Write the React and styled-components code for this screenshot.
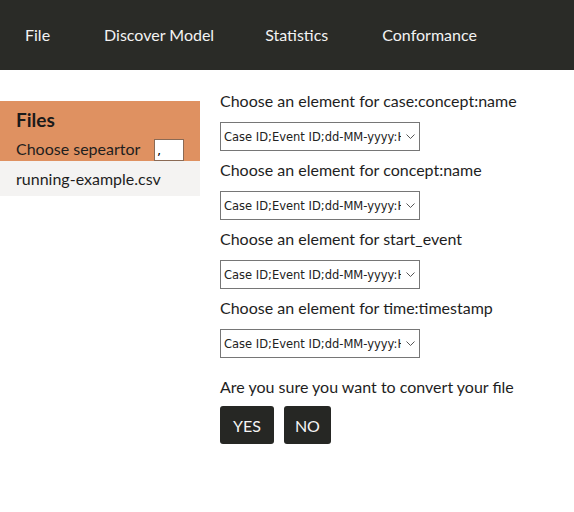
import React from 'react';
import styled, { createGlobalStyle } from 'styled-components';

const Global = createGlobalStyle`
body {
  margin: 0;
  background: #ffffff;
  font-family: Lato, "Open Sans", sans-serif;
  color: #1e1e1e;
}
`
const Nav = styled.nav`
height: 70px;
background: #2a2b27;
display: flex;
align-items: center;
padding-left: 25px;
padding-bottom: 2px;
box-sizing: border-box;
`
const NavItem = styled.span`
color: #f3f3f3;
font-size: 16px;
margin-right: ${props => props.gap}px;
`
const Main = styled.div`
display: flex;
padding-top: 20px;
`
const Sidebar = styled.div`
width: 200px;
flex-shrink: 0;
margin-top: 11px;
margin-right: 20px;
`
const FilesBox = styled.div`
background: #df9161;
padding: 6px 16px 0px 16px;
height: 60px;
box-sizing: border-box;
display: flex;
flex-direction: column;
`
const FilesTitle = styled.div`
font-size: 19px;
font-weight: 700;
line-height: 26px;
color: #1a1a1a;
`
const SepRow = styled.div`
display: flex;
align-items: flex-end;
justify-content: space-between;
font-size: 16px;
margin-top: auto;
padding-right: 0px;
white-space: nowrap;
`
const SepText = styled.span`
line-height: 22px;
margin-bottom: 1px;
`
const SepInput = styled.input`
width: 30px;
height: 22px;
box-sizing: border-box;
border: 1px solid #8a6a55;
padding: 0 2px;
font-size: 13px;
font-family: "DejaVu Sans", sans-serif;
margin: 0;
`
const FileRow = styled.div`
background: #f4f3f2;
height: 35px;
display: flex;
align-items: center;
padding-left: 16px;
font-size: 16px;
`
const Form = styled.div`
display: flex;
flex-direction: column;
`
const Label = styled.div`
font-size: 16px;
line-height: 22px;
margin-top: ${props => props.top}px;
`
const SelectWrap = styled.div`
position: relative;
width: 200px;
height: 29px;
margin-top: 10px;
`
const Select = styled.select`
appearance: none;
width: 100%;
height: 100%;
font-family: "DejaVu Sans", Verdana, sans-serif;
font-size: 11.5px;
color: #222;
background: #fff;
border: 1px solid #767676;
border-radius: 0;
padding: 0 18px 0 3px;
margin: 0;
`
const Chevron = styled.svg`
position: absolute;
right: 5px;
top: 12px;
pointer-events: none;
`
const Buttons = styled.div`
display: flex;
gap: 10px;
margin-top: 8px;
`
const Button = styled.button`
background: #262724;
color: #f5f5f5;
border: none;
border-radius: 3px;
height: 38px;
padding: 0 ${props => props.pad}px;
font-family: Lato, sans-serif;
font-size: 16px;
cursor: pointer;
`

const fields = ['case:concept:name', 'concept:name', 'start_event', 'time:timestamp'];

export default function App() {
  return (
    <>
      <Global />
      <Nav>
        <NavItem gap={54}>File</NavItem>
        <NavItem gap={51}>Discover Model</NavItem>
        <NavItem gap={54}>Statistics</NavItem>
        <NavItem gap={0}>Conformance</NavItem>
      </Nav>
      <Main>
        <Sidebar>
          <FilesBox>
            <FilesTitle>Files</FilesTitle>
            <SepRow>
              <SepText>Choose sepeartor</SepText>
              <SepInput defaultValue="," />
            </SepRow>
          </FilesBox>
          <FileRow>running-example.csv</FileRow>
        </Sidebar>
        <Form>
          {fields.map((f, i) => (
            <React.Fragment key={f}>
              <Label top={i === 0 ? 0 : 8}>Choose an element for {f}</Label>
              <SelectWrap>
                <Select defaultValue="a">
                  <option value="a">Case ID;Event ID;dd-MM-yyyy:HH.mm;Activity</option>
                </Select>
                <Chevron width="9" height="5" viewBox="0 0 9 5">
                  <path d="M0.5 0.5 L4.5 4.5 L8.5 0.5" fill="none" stroke="#555" strokeWidth="1" />
                </Chevron>
              </SelectWrap>
            </React.Fragment>
          ))}
          <Label top={18}>Are you sure you want to convert your file</Label>
          <Buttons>
            <Button pad={13}>YES</Button>
            <Button pad={11}>NO</Button>
          </Buttons>
        </Form>
      </Main>
    </>
  );
}
